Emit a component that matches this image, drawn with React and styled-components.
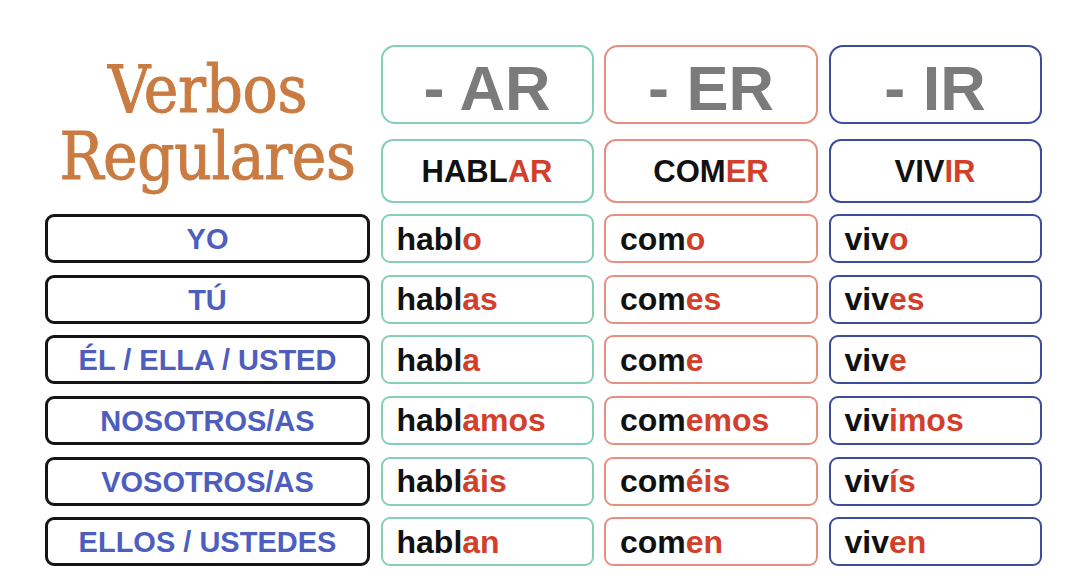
import React from "react";
import styled, { createGlobalStyle } from "styled-components";

const GlobalStyle = createGlobalStyle`
  html, body {
    margin: 0;
    padding: 0;
    background: #ffffff;
  }
  body {
    font-family: "Liberation Sans", Arial, sans-serif;
  }
`;

const COLORS = {
  ar: "#86cfb5",
  er: "#e78f81",
  ir: "#3e4c9d",
  ending: "#d2402b",
  pronoun: "#4d5ebf",
  title: "#c97b41",
  suffix: "#7b7b7b",
};

const groups = [
  { key: "ar", suffix: "AR", stem: "HABL", end: "AR" },
  { key: "er", suffix: "ER", stem: "COM", end: "ER" },
  { key: "ir", suffix: "IR", stem: "VIV", end: "IR" },
];

// pronombre + terminaciones de cada grupo
const rows = [
  { pronoun: "YO", forms: [["habl", "o"], ["com", "o"], ["viv", "o"]] },
  { pronoun: "TÚ", forms: [["habl", "as"], ["com", "es"], ["viv", "es"]] },
  { pronoun: "ÉL / ELLA / USTED", forms: [["habl", "a"], ["com", "e"], ["viv", "e"]] },
  { pronoun: "NOSOTROS/AS", forms: [["habl", "amos"], ["com", "emos"], ["viv", "imos"]] },
  { pronoun: "VOSOTROS/AS", forms: [["habl", "áis"], ["com", "éis"], ["viv", "ís"]] },
  { pronoun: "ELLOS / USTEDES", forms: [["habl", "an"], ["com", "en"], ["viv", "en"]] },
];

const App = () => {
  return (
    <>
      <GlobalStyle />
      <Page>
        <Table>
          <Title>
            <TitleLine>Verbos</TitleLine>
            <TitleLine>Regulares</TitleLine>
          </Title>
          {groups.map((g) => (
            <SuffixBox key={`s_${g.key}`} $color={COLORS[g.key]}>
              - {g.suffix}
            </SuffixBox>
          ))}
          {groups.map((g) => (
            <InfinitiveBox key={`i_${g.key}`} $color={COLORS[g.key]}>
              {g.stem}
              <Ending>{g.end}</Ending>
            </InfinitiveBox>
          ))}
          {rows.map((row) => (
            <React.Fragment key={row.pronoun}>
              <PronounBox>{row.pronoun}</PronounBox>
              {row.forms.map(([stem, end], i) => (
                <FormBox key={`${row.pronoun}_${i}`} $color={COLORS[groups[i].key]}>
                  {stem}
                  <Ending>{end}</Ending>
                </FormBox>
              ))}
            </React.Fragment>
          ))}
        </Table>
      </Page>
    </>
  );
};

const Page = styled.div`
  width: 1080px;
  height: 586px;
  box-sizing: border-box;
  padding: 45px 0 0 45px;
  overflow: hidden;
`;

const Table = styled.div`
  display: grid;
  grid-template-columns: 325px 213px 214px 213px;
  grid-template-rows: 79px 67px repeat(6, 49px);
  column-gap: 10.5px;
  row-gap: 11.6px;
`;

const Title = styled.div`
  grid-column: 1;
  grid-row: 1 / span 2;
  align-self: center;
  display: flex;
  flex-direction: column;
  align-items: center;
  font-family: "DejaVu Serif Condensed", "DejaVu Serif", serif;
  font-stretch: condensed;
  font-size: 65px;
  letter-spacing: -0.4px;
  color: ${COLORS.title};
  -webkit-text-stroke: 0.9px ${COLORS.title};
  margin-top: -2px;
`;

const TitleLine = styled.span`
  display: block;
  line-height: 67px;
  white-space: nowrap;
`;

const Box = styled.div`
  box-sizing: border-box;
  display: flex;
  align-items: center;
  border: 2.5px solid ${(p) => p.$color || "#111"};
  border-radius: 9px;
  background: #fff;
  font-weight: 700;
  color: #111;
  white-space: nowrap;
`;

const SuffixBox = styled(Box)`
  justify-content: center;
  border-radius: 14px;
  font-size: 63px;
  color: ${COLORS.suffix};
  padding-top: 6px;
`;

const InfinitiveBox = styled(Box)`
  justify-content: center;
  align-self: end;
  height: 64px;
  border-radius: 12px;
  font-size: 31px;
  padding-top: 2px;
`;

const PronounBox = styled(Box)`
  justify-content: center;
  border-width: 3px;
  border-color: #151515;
  font-size: 29px;
  color: ${COLORS.pronoun};
  padding-top: 2px;
`;

const FormBox = styled(Box)`
  padding-left: 14px;
  font-size: 32px;
  padding-top: 1px;
`;

const Ending = styled.span`
  color: ${COLORS.ending};
`;

export default App;
